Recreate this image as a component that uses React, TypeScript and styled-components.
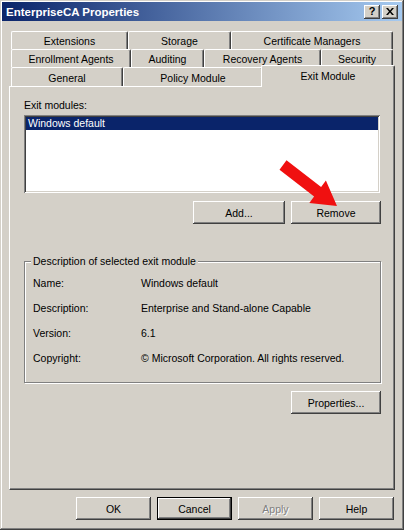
import styled, { createGlobalStyle } from "styled-components";

const FACE = "#d4d0c8";
const SHADOW = "#808080";
const DARK = "#404040";

const raised = `
  box-shadow: inset -1px -1px ${DARK}, inset 1px 1px #fff,
    inset -2px -2px ${SHADOW}, inset 2px 2px ${FACE};
`;

const sunken = `
  box-shadow: inset 1px 1px ${SHADOW}, inset -1px -1px #fff,
    inset 2px 2px ${DARK}, inset -2px -2px ${FACE};
`;

type TabDef = { label: string; width: number; active?: boolean };

const TAB_ROWS: TabDef[][] = [
  [
    { label: "Extensions", width: 117 },
    { label: "Storage", width: 103 },
    { label: "Certificate Managers", width: 162 },
  ],
  [
    { label: "Enrollment Agents", width: 120 },
    { label: "Auditing", width: 73 },
    { label: "Recovery Agents", width: 117 },
    { label: "Security", width: 72 },
  ],
  [
    { label: "General", width: 112 },
    { label: "Policy Module", width: 140 },
    { label: "Exit Module", width: 130, active: true },
  ],
];

const DETAILS = [
  { label: "Name:", value: "Windows default" },
  { label: "Description:", value: "Enterprise and Stand-alone Capable" },
  { label: "Version:", value: "6.1" },
  { label: "Copyright:", value: "© Microsoft Corporation. All rights reserved." },
];

export default function App() {
  return (
    <>
      <GlobalStyle />
      <Window>
        <TitleBar>
          <Title>EnterpriseCA Properties</Title>
          <CaptionButton aria-label="Help">?</CaptionButton>
          <CaptionButton aria-label="Close">
            <svg width="8" height="7" viewBox="0 0 8 7">
              <path d="M0 0h2l2 2.5L6 0h2L5 3.5 8 7H6L4 4.5 2 7H0l3-3.5z" fill="#000" />
            </svg>
          </CaptionButton>
        </TitleBar>

        <Body>
          <TabStrip>
            {TAB_ROWS.map((row, i) => (
              <TabRow key={i}>
                {row.map((t) => (
                  <Tab key={t.label} $w={t.width} $active={!!t.active}>
                    {t.label}
                  </Tab>
                ))}
              </TabRow>
            ))}
          </TabStrip>

          <Panel>
            <FieldLabel>Exit modules:</FieldLabel>
            <ListBox>
              <ListItem $selected>Windows default</ListItem>
            </ListBox>

            <ButtonRow>
              <Button $w={92}>Add...</Button>
              <Button $w={90}>Remove</Button>
            </ButtonRow>

            <Group>
              <Legend>Description of selected exit module</Legend>
              <DetailGrid>
                {DETAILS.map((d) => (
                  <DetailRow key={d.label}>
                    <span>{d.label}</span>
                    <span>{d.value}</span>
                  </DetailRow>
                ))}
              </DetailGrid>
            </Group>

            <PropsRow>
              <Button $w={90}>Properties...</Button>
            </PropsRow>
          </Panel>

          <Footer>
            <Button $w={75}>OK</Button>
            <Button $w={75} $default>
              Cancel
            </Button>
            <Button $w={75} disabled>
              Apply
            </Button>
            <Button $w={75}>Help</Button>
          </Footer>
        </Body>

        <Pointer width="66" height="54" viewBox="0 0 66 54">
          <polygon
            points="10.5,4.2 45.1,31 49.9,24.5 61,50 33.3,47.1 38.1,40.6 3.5,13.8"
            fill="#f01010"
          />
        </Pointer>
      </Window>
    </>
  );
}

/* ---------- styled ---------- */
const GlobalStyle = createGlobalStyle`
  html, body {
    margin: 0;
    background: ${FACE};
  }
  body {
    font-family: "Liberation Sans", Arial, sans-serif;
    font-size: 10.5px;
    color: #000;
  }
`;

const Window = styled.div`
  position: relative;
  width: 404px;
  height: 530px;
  box-sizing: border-box;
  padding: 2px;
  background: ${FACE};
  box-shadow: inset -1px -1px ${DARK}, inset 1px 1px ${FACE},
    inset -2px -2px ${SHADOW}, inset 2px 2px #fff;
  display: flex;
  flex-direction: column;
`;

const TitleBar = styled.div`
  height: 19px;
  display: flex;
  align-items: center;
  gap: 2px;
  padding: 0 4px 0 4px;
  background: linear-gradient(to right, #0a246a, #a6caf0);
`;

const Title = styled.div`
  flex: 1;
  color: #fff;
  font-weight: bold;
  font-size: 11.5px;
`;

const CaptionButton = styled.div`
  width: 16px;
  height: 14px;
  box-sizing: border-box;
  display: flex;
  align-items: center;
  justify-content: center;
  background: ${FACE};
  font-weight: bold;
  font-size: 11px;
  line-height: 1;
  ${raised}
`;

const Body = styled.div`
  flex: 1;
  display: flex;
  flex-direction: column;
  padding: 10px 7px 0 7px;
`;

const TabStrip = styled.div`
  display: flex;
  flex-direction: column;
  padding: 0 2px;
`;

const TabRow = styled.div`
  display: flex;
  height: 18px;
  &:last-child {
    height: 19px;
  }
`;

const Tab = styled.div<{ $w: number; $active: boolean }>`
  flex: 0 0 ${({ $w, $active }) => ($active ? $w + 4 : $w)}px;
  box-sizing: border-box;
  display: flex;
  align-items: center;
  justify-content: center;
  background: ${FACE};
  border-top: 1px solid #fff;
  border-left: 1px solid #fff;
  border-right: 1px solid ${DARK};
  border-radius: 2px 2px 0 0;
  box-shadow: inset -1px 0 ${SHADOW};
  white-space: nowrap;
  padding-top: 1px;
  ${({ $active }) =>
    $active &&
    `
    position: relative;
    z-index: 1;
    margin: -2px -2px -1px -2px;
    padding: 0 0 2px;
  `}
`;

const Panel = styled.div`
  height: 404px;
  box-sizing: border-box;
  display: flex;
  flex-direction: column;
  padding: 12px 14px 0 14px;
  border-top: 1px solid #fff;
  border-left: 1px solid #fff;
  border-right: 1px solid ${DARK};
  border-bottom: 1px solid ${DARK};
  box-shadow: inset -1px -1px ${SHADOW};
`;

const FieldLabel = styled.div`
  line-height: 13px;
`;

const ListBox = styled.div`
  margin-top: 3px;
  height: 78px;
  box-sizing: border-box;
  padding: 2px;
  background: #fff;
  ${sunken}
`;

const ListItem = styled.div<{ $selected?: boolean }>`
  height: 13px;
  line-height: 13px;
  padding-left: 2px;
  background: ${({ $selected }) => ($selected ? "#0a246a" : "transparent")};
  color: ${({ $selected }) => ($selected ? "#fff" : "#000")};
`;

const ButtonRow = styled.div`
  margin-top: 8px;
  margin-right: -1px;
  display: flex;
  justify-content: flex-end;
  gap: 6px;
`;

const Button = styled.button<{ $w: number; $default?: boolean }>`
  width: ${({ $w }) => $w}px;
  height: 23px;
  box-sizing: border-box;
  padding: 0;
  border: ${({ $default }) => ($default ? "1px solid #000" : "none")};
  background: ${FACE};
  font-family: "Liberation Sans", Arial, sans-serif;
  font-size: 10.5px;
  color: #000;
  ${raised}
  &:disabled {
    color: ${SHADOW};
    text-shadow: 1px 1px #fff;
  }
`;

const Group = styled.fieldset`
  margin: 31px -1px 0 0;
  height: 128px;
  box-sizing: border-box;
  padding: 0 0 0 6px;
  border: 1px solid ${SHADOW};
  box-shadow: 1px 1px 0 #fff, inset 1px 1px 0 #fff;
  min-width: 0;
`;

const Legend = styled.legend`
  padding: 0 2px;
  line-height: 13px;
  background: ${FACE};
`;

const DetailGrid = styled.div`
  display: flex;
  flex-direction: column;
  padding: 2px 2px 0;
`;

const DetailRow = styled.div`
  display: grid;
  grid-template-columns: 108px 1fr;
  height: 25px;
  align-items: center;
  white-space: nowrap;
`;

const PropsRow = styled.div`
  margin-top: 8px;
  margin-right: -1px;
  display: flex;
  justify-content: flex-end;
`;

const Footer = styled.div`
  margin-top: 7px;
  margin-right: 1px;
  display: flex;
  justify-content: flex-end;
  gap: 6px;
`;

const Pointer = styled.svg`
  position: absolute;
  left: 276px;
  top: 156px;
  pointer-events: none;
`;
